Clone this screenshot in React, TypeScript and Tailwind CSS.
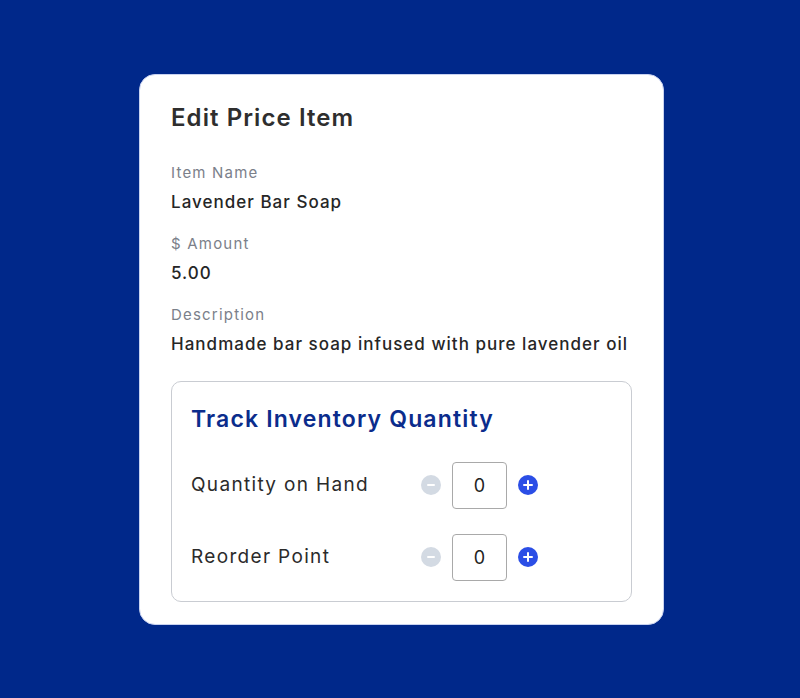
const FONT = { fontFamily: 'Inter, "Noto Sans", sans-serif' };

function Field({ label, value }: { label: string; value: string }) {
  return (
    <div className="flex flex-col">
      <span className="text-[15px] leading-[22px] tracking-[0.08em] text-[#7b808a]">{label}</span>
      <span className="mt-[6px] text-[17px] leading-[24px] tracking-[0.06em] font-medium text-[#262626] whitespace-nowrap">{value}</span>
    </div>
  );
}

function Stepper({ label, value }: { label: string; value: number }) {
  return (
    <div className="flex items-center">
      <span className="w-[230px] text-[19px] leading-[28px] tracking-[0.07em] text-[#2b2b2b]">{label}</span>
      <div className="flex items-center gap-[11px]">
        <button className="w-5 h-5 rounded-full bg-[#d3dae3] flex items-center justify-center">
          <span className="block w-[8px] h-[2px] bg-white rounded" />
        </button>
        <div className="w-[55px] h-[47px] rounded-[4px] border border-[#a9a9a9] flex items-center justify-center text-[18px] text-[#222]">
          {value}
        </div>
        <button className="w-5 h-5 rounded-full bg-[#2b4ee6] flex items-center justify-center relative">
          <span className="absolute w-[10px] h-[2.5px] bg-white rounded" />
          <span className="absolute w-[2.5px] h-[10px] bg-white rounded" />
        </button>
      </div>
    </div>
  );
}

export default function App() {
  return (
    <div className="w-[800px] h-[698px] bg-[#00288a] flex items-center justify-center pl-[3px]" style={FONT}>
      <div className="w-[525px] bg-white rounded-[16px] border border-[#c8d2f0] px-[31px] pt-[27px] pb-[22px]">
        <h1 className="text-[24px] leading-[32px] tracking-[0.045em] font-semibold text-[#2e2e2e]">Edit Price Item</h1>
        <div className="mt-[28px] flex flex-col gap-[19px]">
          <Field label="Item Name" value="Lavender Bar Soap" />
          <Field label="$ Amount" value="5.00" />
          <Field label="Description" value="Handmade bar soap infused with pure lavender oil" />
        </div>
        <div className="mt-[25px] border border-[#c9ccd2] rounded-[10px] px-[19px] pt-[22px] pb-[20px]">
          <h2 className="text-[23px] leading-[30px] tracking-[0.05em] font-semibold text-[#0b2c8c]">Track Inventory Quantity</h2>
          <div className="mt-[28px] flex flex-col gap-[25px]">
            <Stepper label="Quantity on Hand" value={0} />
            <Stepper label="Reorder Point" value={0} />
          </div>
        </div>
      </div>
    </div>
  );
}
